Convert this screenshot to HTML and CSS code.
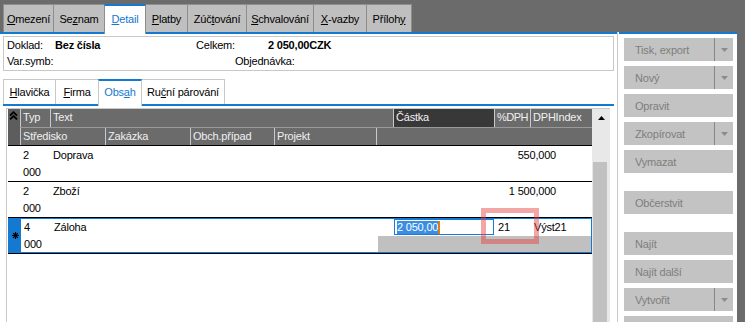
FILE: index.html
```html
<!DOCTYPE html>
<html lang="cs">
<head>
<meta charset="utf-8">
<title>Detail</title>
<link rel="stylesheet" href="styles.css">
</head>
<body>
<div class="app">
  <nav class="tabs">
    <div class="tab"><u>O</u>mezení</div>
    <div class="tab">Se<u>z</u>nam</div>
    <div class="tab active"><u>D</u>etail</div>
    <div class="tab"><u>P</u>latby</div>
    <div class="tab">Zúč<u>t</u>ování</div>
    <div class="tab"><u>S</u>chvalování</div>
    <div class="tab"><u>X</u>-vazby</div>
    <div class="tab">Příloh<u>y</u></div>
  </nav>
  <div class="workspace">
    <main class="main">
      <section class="info">
        <span class="i-doklad">Doklad:</span>
        <span class="i-doklad-v b">Bez čísla</span>
        <span class="i-celkem">Celkem:</span>
        <span class="i-celkem-v b">2 050,00CZK</span>
        <span class="i-var">Var.symb:</span>
        <span class="i-obj">Objednávka:</span>
      </section>
      <nav class="subtabs">
        <div class="stab"><u>H</u>lavička</div>
        <div class="stab"><u>F</u>irma</div>
        <div class="stab active">Obs<u>a</u>h</div>
        <div class="stab">Ru<u>č</u>ní párování</div>
      </nav>
      <div class="subpanel">
        <div class="grid">
          <div class="gbody">
            <div class="ghead">
              <div class="ind hind">
                <svg width="9" height="9" viewBox="0 0 9 9"><path d="M1 4.6 4.5 1.2 8 4.6M1 8.4 4.5 5 8 8.4" fill="none" stroke="#000" stroke-width="1.8"/></svg>
              </div>
              <div class="lines">
                <div class="la hrow">
                  <span class="hc">Typ</span>
                  <span class="hc">Text</span>
                  <span class="hc sorted">Částka</span>
                  <span class="hc tight">%DPH</span>
                  <span class="hc">DPHIndex</span>
                </div>
                <div class="lb hrow">
                  <span class="hc">Středisko</span>
                  <span class="hc">Zakázka</span>
                  <span class="hc">Obch.případ</span>
                  <span class="hc">Projekt</span>
                  <span class="hc"></span>
                </div>
              </div>
            </div>

            <div class="rec">
              <div class="ind"></div>
              <div class="lines">
                <div class="la"><span class="c">2</span><span class="c">Doprava</span><span class="c amt">550,000</span></div>
                <div class="lb"><span class="c">000</span></div>
              </div>
            </div>

            <div class="rec">
              <div class="ind"></div>
              <div class="lines">
                <div class="la"><span class="c">2</span><span class="c">Zboží</span><span class="c amt">1 500,000</span></div>
                <div class="lb"><span class="c">000</span></div>
              </div>
            </div>

            <div class="rec sel">
              <div class="ind">
                <svg width="7" height="7" viewBox="0 0 7 7"><path d="M3.5 0v7M0 3.5h7M1.1 1.1l4.8 4.8M5.9 1.1 1.1 5.9" fill="none" stroke="#000" stroke-width="1.2"/></svg>
              </div>
              <div class="lines">
                <div class="la">
                  <span class="c">4</span>
                  <span class="c">Záloha</span>
                  <span class="ecell"><span class="editor"><span class="seltext">2 050,00</span><span class="caret"></span></span></span>
                  <span class="c">21</span>
                  <span class="c">Výst21</span>
                </div>
                <div class="lb">
                  <span class="c">000</span><span></span><span></span><span></span><span class="blank"></span>
                </div>
              </div>
            </div>
          </div>
          <div class="vscroll">
            <div class="sb-up"><svg width="7" height="4" viewBox="0 0 7 4"><path d="M0 4h7L3.5 0z" fill="#000"/></svg></div>
            <div class="thumb"></div>
          </div>
        </div>
      </div>
    </main>
    <div class="sep"></div>
    <aside class="side">
      <div class="btn split"><span class="lbl">Tisk, export</span><span class="dd"><svg width="7" height="4" viewBox="0 0 7 4"><path d="M0 0h7L3.5 4z" fill="#8c8c8c"/></svg></span></div>
      <div class="btn split"><span class="lbl">Nový</span><span class="dd"><svg width="7" height="4" viewBox="0 0 7 4"><path d="M0 0h7L3.5 4z" fill="#8c8c8c"/></svg></span></div>
      <div class="btn"><span class="lbl">Opravit</span></div>
      <div class="btn split"><span class="lbl">Zkopírovat</span><span class="dd"><svg width="7" height="4" viewBox="0 0 7 4"><path d="M0 0h7L3.5 4z" fill="#8c8c8c"/></svg></span></div>
      <div class="btn"><span class="lbl">Vymazat</span></div>
      <div class="btn group"><span class="lbl">Občerstvit</span></div>
      <div class="btn group"><span class="lbl">Najít</span></div>
      <div class="btn"><span class="lbl">Najít další</span></div>
      <div class="btn split"><span class="lbl">Vytvořit</span><span class="dd"><svg width="7" height="4" viewBox="0 0 7 4"><path d="M0 0h7L3.5 4z" fill="#8c8c8c"/></svg></span></div>
      <div class="btn"><span class="lbl"></span></div>
    </aside>
  </div>
  <div class="annot"></div>
</div>
</body>
</html>
```

FILE: styles.css
```css
* { box-sizing: border-box; margin: 0; padding: 0; }

html, body { height: 100%; }

body {
  background: #6b6b6b;
  font-family: "Liberation Sans", Arial, sans-serif;
  font-size: 11px;
  letter-spacing: -0.2px;
  color: #000;
  overflow: hidden;
}

u { text-decoration: underline; text-underline-offset: 1px; }

.app {
  position: relative;
  width: 745px;
  height: 322px;
  display: flex;
  flex-direction: column;
}

/* ---------- main tabs ---------- */
.tabs {
  display: flex;
  height: 32px;
  padding: 4px 0 0 3px;
  align-items: flex-start;
}

.tab {
  height: 28px;
  border: 1px solid #8d8d8d;
  border-bottom: none;
  background: #bfbfbf;
  display: flex;
  align-items: center;
  justify-content: center;
  white-space: nowrap;
}

.tab + .tab { margin-left: -1px; }

.tab:nth-child(1) { width: 51px; }
.tab:nth-child(2) { width: 52px; }
.tab:nth-child(3) { width: 42px; }
.tab:nth-child(4) { width: 43px; }
.tab:nth-child(5) { width: 60px; }
.tab:nth-child(6) { width: 68px; }
.tab:nth-child(7) { width: 54px; }
.tab:nth-child(8) { width: 46px; }

.tab.active {
  position: relative;
  z-index: 1;
  height: 30px;
  margin-bottom: -2px;
  background: #fff;
  border-top: 2px solid #1479d0;
  color: #1479d0;
  padding-bottom: 3px;
}

/* ---------- workspace ---------- */
.workspace {
  flex: 1;
  display: flex;
  min-height: 0;
}

.main {
  width: 617px;
  background: #fff;
  border-top: 2px solid #1479d0;
  display: flex;
  flex-direction: column;
  min-height: 0;
}

.sep {
  width: 2px;
  background: #fff;
  border-left: 1px solid #c8c8c8;
}

/* ---------- info box ---------- */
.info {
  margin: 2px 3px 0;
  height: 35px;
  border: 1px solid #c8c8c8;
  padding-left: 3px;
  display: grid;
  grid-template-columns: 48px 141px 39px 33px 1fr;
  grid-template-rows: 16px 16px;
  line-height: 16px;
  white-space: nowrap;
}

.b { font-weight: bold; }
.i-doklad { grid-column: 1; grid-row: 1; }
.i-doklad-v { grid-column: 2; grid-row: 1; }
.i-celkem { grid-column: 3 / span 2; grid-row: 1; }
.i-celkem-v { grid-column: 5; grid-row: 1; }
.i-var { grid-column: 1 / span 2; grid-row: 2; }
.i-obj { grid-column: 4 / span 2; grid-row: 2; }

/* ---------- sub tabs ---------- */
.subtabs {
  display: flex;
  margin-top: 8px;
  padding-left: 3px;
  height: 25px;
  align-items: flex-start;
}

.stab {
  height: 25px;
  border: 1px solid #c8c8c8;
  border-bottom: none;
  background: #fff;
  display: flex;
  align-items: center;
  justify-content: center;
  white-space: nowrap;
}

.stab + .stab { margin-left: -1px; }

.stab:nth-child(1) { width: 53px; }
.stab:nth-child(2) { width: 44px; }
.stab:nth-child(3) { width: 44px; }
.stab:nth-child(4) { width: 84px; }

.stab.active {
  position: relative;
  z-index: 1;
  height: 27px;
  margin-bottom: -2px;
  border-top: 2px solid #1479d0;
  color: #1479d0;
  padding-bottom: 3px;
}

.subpanel {
  margin: 0 3px;
  border-top: 2px solid #1479d0;
  flex: 1;
  display: flex;
  flex-direction: column;
  min-height: 0;
}

/* ---------- grid ---------- */
.grid {
  margin: 2px 0 0 3px;
  width: 604px;
  flex: 1;
  display: flex;
  border-left: 1px solid #c8c8c8;
  border-top: 1px solid #c8c8c8;
  padding-left: 1px;
  min-height: 0;
}

.gbody {
  width: 584px;
  display: flex;
  flex-direction: column;
}

.ind {
  width: 12px;
  flex: none;
  display: flex;
  align-items: center;
  justify-content: center;
}

.lines {
  flex: 1;
  display: flex;
  flex-direction: column;
  min-width: 0;
}

.la {
  display: grid;
  grid-template-columns: 30px 343px 101px 36px 1fr;
}

.lb {
  display: grid;
  grid-template-columns: 85px 85px 84px 102px 1fr;
}

.ghead {
  display: flex;
  height: 37px;
  border-bottom: 1px solid #000;
}

.hind {
  background: #5d5d5d;
  align-items: flex-start;
  justify-content: flex-start;
  padding: 2px 0 0 1px;
}

.hrow.la { height: 19px; border-bottom: 1px solid #9a9a9a; }
.hrow.lb { height: 17px; }

.hc {
  background: #6b6b6b;
  color: #f0f0f0;
  border-left: 1px solid #c9c9c9;
  padding-left: 2px;
  line-height: 17px;
  white-space: nowrap;
  overflow: hidden;
}

.hc.sorted { background: #383838; }
.hc.tight { letter-spacing: -0.5px; padding-left: 2px; }

.rec {
  display: flex;
  height: 36px;
  border-bottom: 1px solid #000;
  flex: none;
}

.rec .la { height: 18px; line-height: 18px; }
.rec .lb { height: 17px; line-height: 17px; }

.c {
  padding-left: 3px;
  white-space: nowrap;
}

.c.amt {
  grid-column: 3 / -1;
  text-align: right;
  padding-right: 36px;
}

.rec.sel {
  height: 35px;
  border: 1px solid #1479d0;
  box-shadow: 0 1px 0 #000;
}

.rec.sel .ind { background: #1479d0; }
.rec.sel .la { height: 17px; line-height: 17px; }
.rec.sel .lb { height: 16px; line-height: 16px; }

.ecell { display: flex; }

.editor {
  width: 100px;
  height: 16px;
  border: 1px solid #1a7bd6;
  padding-left: 2px;
  display: flex;
  align-items: center;
}

.seltext {
  background: #3a8de0;
  color: #fff;
  line-height: 13px;
}

.caret {
  width: 2px;
  height: 13px;
  background: #e07a1a;
}

.blank {
  background: #c0c0c0;
  margin-left: 1px;
}

/* ---------- scrollbar ---------- */
.vscroll {
  width: 18px;
  background: #e8e8e8;
  display: flex;
  flex-direction: column;
}

.sb-up {
  height: 18px;
  display: flex;
  align-items: center;
  justify-content: center;
}

.thumb {
  margin: 35px 0 0 1px;
  width: 14px;
  flex: 1;
  background: #c1c1c1;
}

/* ---------- side panel ---------- */
.side {
  width: 118px;
  background: #fff;
  border-top: 2px solid #1479d0;
  padding: 4px 4px 0 5px;
  display: flex;
  flex-direction: column;
  gap: 5px;
  overflow: hidden;
}

.btn {
  height: 23px;
  flex: none;
  background: #c3c3c3;
  color: #7e7e7e;
  display: flex;
  align-items: center;
  padding-left: 11px;
  white-space: nowrap;
}

.btn.group { margin-top: 13px; }

.btn .lbl { flex: 1; }

.dd {
  width: 19px;
  height: 100%;
  border-left: 1px solid #878787;
  display: flex;
  align-items: center;
  justify-content: center;
}

/* ---------- annotation overlay ---------- */
.annot {
  position: absolute;
  left: 481px;
  top: 208px;
  width: 58px;
  height: 36px;
  border: 5px solid rgba(226, 60, 60, 0.46);
}
```
